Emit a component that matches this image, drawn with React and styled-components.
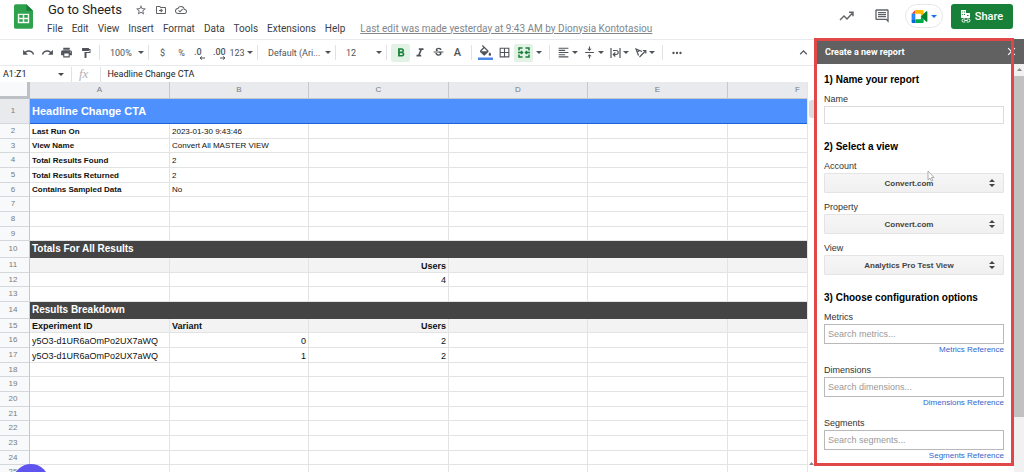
import { useState } from "react";
import styled, { createGlobalStyle } from "styled-components";
import { MdStarBorder, MdOutlineDriveFileMove, MdOutlineCloudDone, MdUndo, MdRedo, MdPrint, MdFormatPaint, MdFormatBold, MdFormatItalic, MdStrikethroughS, MdBorderAll, MdFormatAlignLeft, MdVerticalAlignCenter, MdMoreHoriz, MdKeyboardArrowUp, MdOutlineComment, MdClose } from "react-icons/md";

const GlobalStyle = createGlobalStyle`
  * {
    box-sizing: border-box;
  }
  body {
    margin: 0;
    background: #fff;
    color: #000;
    font-family: Roboto, "Liberation Sans", sans-serif;
    overflow: hidden;
  }
  button, input, select {
    font-family: inherit;
  }
`

const Page = styled.div`
  display: flex;
  flex-direction: column;
  height: 100vh;
  overflow: hidden;
`

const Header = styled.header`
  display: flex;
  flex: none;
  height: 39px;
  padding: 0 12px;
`

const Logo = styled.svg`
  flex: none;
  width: 19px;
  height: 25px;
  margin: 4px 14px 0 2px;
`

const HeaderText = styled.div`
  flex: 1;
  min-width: 0;
`

const TitleRow = styled.div`
  display: flex;
  align-items: center;
  gap: 8px;
  height: 20px;
  padding-left: 1px;
  color: #5f6368;
`

const Title = styled.h1`
  margin: 0 5px 0 0;
  font-size: 13px;
  font-weight: 400;
  line-height: 20px;
  color: #222;
`

const MenuBar = styled.nav`
  display: flex;
  align-items: center;
  gap: 9px;
  height: 17px;
`

const MenuItem = styled.button`
  padding: 0;
  border: none;
  background: none;
  font-size: 10px;
  line-height: 16px;
  color: #3c4043;
`

const LastEdit = styled.a`
  margin-left: 6px;
  font-size: 10px;
  line-height: 16px;
  white-space: nowrap;
  color: #80868b;
`

const HeaderActions = styled.div`
  display: flex;
  align-items: center;
  height: 32px;
  color: #5f6368;
`

const IconButton = styled.button`
  display: flex;
  align-items: center;
  justify-content: center;
  flex: none;
  width: ${props => props.$width || 19}px;
  height: 18px;
  padding: 0;
  border: none;
  border-radius: 2px;
  color: ${props => props.$active ? "#188038" : "inherit"};
  background: ${props => props.$active ? "#e2f3e6" : "none"};
`

const MeetButton = styled.button`
  display: flex;
  align-items: center;
  justify-content: center;
  gap: 3px;
  width: 38px;
  height: 24px;
  margin: 0 8px 0 6px;
  padding: 0;
  border: 1px solid #e6e8eb;
  border-radius: 12px;
  color: #1a73e8;
  background: #fff;
`

const ShareButton = styled.button`
  display: flex;
  align-items: center;
  justify-content: center;
  gap: 4px;
  width: 62px;
  height: 25px;
  margin-right: -1px;
  padding: 0;
  border: none;
  border-radius: 3px;
  font-size: 11px;
  font-weight: 500;
  color: #fff;
  background: #188038;
`

const Body = styled.div`
  display: flex;
  flex: 1;
  min-height: 0;
`

const Workspace = styled.main`
  display: flex;
  flex-direction: column;
  flex: 1;
  min-width: 0;
`

const Toolbar = styled.div`
  display: flex;
  align-items: center;
  flex: none;
  height: 27px;
  padding: 0 2px 0 19px;
  border-top: 1px solid #e8eaed;
  border-bottom: 1px solid #e8eaed;
  color: #50545a;
`

const ToolButton = styled(IconButton)`
  font-size: 9px;
  gap: 2px;
`

const DropButton = styled(ToolButton)`
  justify-content: space-between;
  padding-left: 6px;
`

const Divider = styled.span`
  flex: none;
  width: 1px;
  height: 15px;
  margin: 0 4px;
  background: #e0e2e5;
`

const Spacer = styled.span`
  flex: 1;
`

const TextColor = styled.span`
  font-size: 11px;
  font-weight: 500;
  line-height: 14px;
`

const FormulaBar = styled.div`
  display: flex;
  align-items: center;
  flex: none;
  height: 16px;
  padding-left: 3px;
  color: #444746;
`

const NameBox = styled.input`
  width: 52px;
  padding: 0;
  border: none;
  font-size: 9px;
  line-height: 14px;
  color: #222;
`

const Fx = styled.label`
  padding: 0 8px 0 3px;
  font: italic 13px "Liberation Serif", serif;
  line-height: 14px;
  color: #b0b3b7;
`

const FormulaInput = styled.input`
  flex: 1;
  min-width: 0;
  padding: 0 2px;
  border: none;
  font-size: 9px;
  line-height: 14px;
  color: #222;
`

const SheetArea = styled.div`
  display: flex;
  flex: 1;
  min-height: 0;
`

const SheetView = styled.div`
  flex: 1;
  min-width: 0;
  overflow: hidden;
`

const SheetScroll = styled.div`
  display: flex;
  flex-direction: column;
  justify-content: space-between;
  flex: none;
  width: 8px;
  padding: 18px 0 7px 1px;
  border-left: 1px solid #e3e5e8;
  color: #80868b;
  &::before {
    content: "";
    height: 18px;
    border-radius: 3px 0 0 3px;
    background: #dadce0;
  }
`

const Sheet = styled.table`
  width: max(100%, 868px);
  table-layout: fixed;
  border-collapse: separate;
  border-spacing: 0;
  font-family: "Liberation Sans", Arial, sans-serif;
`

const ColHead = styled.th`
  height: 17px;
  padding: 0;
  border-right: 1px solid #c4c7cb;
  border-bottom: 1px solid #c4c7cb;
  font-size: 8px;
  font-weight: 400;
  line-height: 14px;
  color: #777b80;
  background: #e8eaed;
`

const Corner = styled.td`
  padding: 0;
  border-right: 3px solid #bdc0c4;
  border-bottom: 3px solid #bdc0c4;
  background: #f8f9fa;
`

const RowHead = styled.th`
  padding: 0 3px 0 0;
  border-right: 1px solid #c4c7cb;
  border-bottom: 1px solid #d5d7da;
  font-size: 8px;
  font-weight: 400;
  line-height: 12px;
  color: #777b80;
  background: ${props => props.$selected ? "#e8eaed" : "#f8f9fa"};
`

const Cell = styled.td`
  padding: 0 2px;
  border-right: 1px solid #e2e3e3;
  border-bottom: 1px solid #e2e3e3;
  font-size: ${props => props.$small ? 8 : 9}px;
  font-weight: ${props => props.$bold ? 700 : 400};
  line-height: 12px;
  text-align: ${props => props.$right ? "right" : "left"};
  vertical-align: bottom;
  white-space: nowrap;
  color: #111;
`

const Row = styled.tr`
  height: ${props => props.$height}px;
  ${Cell} {
    background: ${props => props.$shaded ? "#f3f3f3" : "#fff"};
  }
`

const BandCell = styled(Cell)`
  ${Row} & {
    border-color: ${props => props.$selected ? "#1a62d6" : "#444"};
    color: #fff;
    background: ${props => props.$selected ? "#4d90fe" : "#444"};
    font-size: ${props => props.$selected ? 11 : 10}px;
    font-weight: 700;
    vertical-align: middle;
  }
`

const Sidebar = styled.aside`
  position: relative;
  display: flex;
  flex-direction: column;
  flex: none;
  width: 209px;
  font-family: "Liberation Sans", Arial, sans-serif;
`

const SidebarHeader = styled.div`
  display: flex;
  align-items: center;
  justify-content: space-between;
  flex: none;
  height: 25px;
  padding: 0 5px 0 10px;
  color: #fff;
  background: #616161;
`

const SidebarTitle = styled.h2`
  margin: 0;
  font: 700 9px Roboto, sans-serif;
`

const SidebarBody = styled.div`
  display: flex;
  flex: 1;
  min-height: 0;
`

const Form = styled.form`
  flex: 1;
  min-width: 0;
  padding: 8px 10px 0 9px;
  overflow: hidden;
`

const Section = styled.section`
  margin-bottom: 15px;
`

const SectionTitle = styled.h3`
  margin: 0 0 5px;
  font-size: 10px;
  line-height: 16px;
`

const Field = styled.div`
  display: flex;
  flex-direction: column;
  margin-bottom: 8px;
`

const Label = styled.label`
  font-size: 9px;
  line-height: 13px;
  color: #333;
`

const TextInput = styled.input`
  height: ${props => props.$tall ? 20 : 18}px;
  padding: 0 3px;
  border: 1px solid ${props => props.$tall ? "#b9b9b9" : "#dcdcdc"};
  font-size: 9px;
  background: #fff;
  &::placeholder {
    color: #999;
  }
`

const SelectWrap = styled.div`
  position: relative;
  svg {
    position: absolute;
    right: 9px;
    top: 6px;
    pointer-events: none;
  }
`

const Select = styled.select`
  display: block;
  appearance: none;
  width: 100%;
  height: 20px;
  padding: 0 10px 0 0;
  border: 1px solid #e4e4e4;
  border-radius: 1px;
  font-size: 8px;
  font-weight: 700;
  text-align: center;
  text-align-last: center;
  color: #444;
  background: linear-gradient(#f6f6f6, #f0f0f0);
`

const Reference = styled.a`
  align-self: flex-end;
  font-size: 8px;
  line-height: 12px;
  color: #3366cc;
  text-decoration: none;
`

const SidebarScroll = styled.div`
  flex: none;
  width: 10px;
  padding-top: 12px;
  background: #f1f1f1;
  position: relative;
  &::after {
    content: "";
    display: block;
    height: 86%;
    background: #c1c1c1;
  }
  svg {
    position: absolute;
    top: 4px;
    left: 3px;
  }
`

const Highlight = styled.div`
  position: absolute;
  inset: -1px 10px 6px -1px;
  border: 3px solid #e04848;
  pointer-events: none;
`

const Pointer = styled.svg`
  position: absolute;
  left: 112px;
  top: 131px;
`

const Bubble = styled.div`
  position: fixed;
  left: 13px;
  bottom: -28px;
  width: 36px;
  height: 36px;
  border-radius: 50%;
  background: #5f55ee;
`

const columns = ["A", "B", "C", "D", "E", "F"];
const widths = [140, 139, 140, 139, 140];

const rows = [
  { band: "Headline Change CTA", selected: true, height: 25 },
  { cells: ["Last Run On", "2023-01-30 9:43:46"], info: true },
  { cells: ["View Name", "Convert All MASTER VIEW"], info: true },
  { cells: ["Total Results Found", "2"], info: true },
  { cells: ["Total Results Returned", "2"], info: true },
  { cells: ["Contains Sampled Data", "No"], info: true },
  {},
  {},
  {},
  { band: "Totals For All Results", height: 17 },
  { cells: ["", "", "Users"], shaded: true },
  { cells: ["", "", "4"] },
  {},
  { band: "Results Breakdown", height: 17 },
  { cells: ["Experiment ID", "Variant", "Users"], shaded: true },
  { cells: ["y5O3-d1UR6aOmPo2UX7aWQ", "0", "2"] },
  { cells: ["y5O3-d1UR6aOmPo2UX7aWQ", "1", "2"] },
  {}, {}, {}, {}, {}, {}, {}, {},
];

const Caret = () => (
  <svg width="6" height="3" viewBox="0 0 6 3">
    <path d="M0 0h6L3 3z" fill="currentColor" />
  </svg>
);

const SheetsLogo = () => (
  <Logo viewBox="0 0 20 26">
    <path d="M2 0h11l7 7v17a2 2 0 0 1-2 2H2a2 2 0 0 1-2-2V2a2 2 0 0 1 2-2z" fill="#2da14c" />
    <path d="M13 0l7 7h-7z" fill="#168039" />
    <path d="M4 10h12v10H4zM5.500 11.500v2.700h3.700v-2.700zM10.800 11.500v2.700h3.700v-2.700zM5.500 15.800v2.700h3.700v-2.700zM10.800 15.800v2.700h3.700v-2.700z" fill="#f1f8f2" fillRule="evenodd" />
  </Logo>
);

const TrendIcon = () => (
  <svg width="15" height="10" viewBox="0 0 15 10" fill="none" stroke="currentColor" strokeWidth="1.400">
    <path d="M1 9l4-4 3 3 5.500-6M10 1.200h4v4" />
  </svg>
);

const MeetIcon = () => (
  <svg width="17" height="13" viewBox="0 0 17 14">
    <path d="M4 0v4H0z" fill="#ea4335" />
    <path d="M0 4h4v6H0z" fill="#2684fc" />
    <path d="M0 10h4v4H1a1 1 0 0 1-1-1z" fill="#0066da" />
    <path d="M4 0h8a1 1 0 0 1 1 1v3.500L10 7V4H4z" fill="#ffba00" />
    <path d="M4 10h6V7l3 2v4a1 1 0 0 1-1 1H4z" fill="#00ac47" />
    <path d="M10 7l5.500-5.500c.600-.500 1.500-.200 1.500.500v10c0 .700-.900 1-1.500.500z" fill="#00832d" />
  </svg>
);

const ShareIcon = () => (
  <svg width="10" height="13" viewBox="0 0 10 13" fill="#fff">
    <path d="M0 0h5v3h4v5H0zM1.200 1.400v1h1v-1zM3 1.400v1h1v-1zM1.200 4v1h1V4zM3 4v1h1V4zM6 5v1h1.500V5z" fillRule="evenodd" />
    <path d="M4.300 9H2.500a1.500 1.500 0 0 0 0 3h1.800M5.700 9h1.800a1.500 1.500 0 0 1 0 3H5.700M3.300 10.500h3.400" fill="none" stroke="#fff" />
  </svg>
);

const FillIcon = () => (
  <svg width="15" height="15" viewBox="0 0 24 24" fill="currentColor">
    <path d="M16.560 8.940L7.620 0 6.210 1.410l2.380 2.380-5.150 5.150c-.590.590-.590 1.540 0 2.120l5.500 5.500c.290.290.680.440 1.060.440s.770-.150 1.060-.440l5.500-5.500c.590-.580.590-1.530 0-2.120zM5.210 10L10 5.210 14.790 10H5.210zM19 11.500s-2 2.170-2 3.500c0 1.100.900 2 2 2s2-.900 2-2c0-1.330-2-3.500-2-3.500z" />
    <path d="M0 20h24v4H0z" fill="#4a86e8" />
  </svg>
);

const MergeIcon = () => (
  <svg width="12" height="11" viewBox="0 0 12 11" fill="none" stroke="currentColor" strokeWidth="1.500">
    <path d="M1 3.500V1h3.500M7.500 1H11v2.500M1 7.500V10h3.500M7.500 10H11V7.500M0 5.500h4M12 5.500H8M3 4l1.500 1.500L3 7M9 4L7.500 5.500 9 7" />
  </svg>
);

const WrapIcon = () => (
  <svg width="11" height="10" viewBox="0 0 11 10" fill="none" stroke="currentColor" strokeWidth="1.200">
    <path d="M1 0v10M10 0v10M3 2.500h3.200a2 2 0 0 1 0 4H3.500M5.300 4.500l-2 2 2 2" />
  </svg>
);

const RotateIcon = () => (
  <svg width="12" height="10" viewBox="0 0 12 10" fill="none" stroke="currentColor" strokeWidth="1.200">
    <path d="M3.500 7.500L1 1l6 2.500M2 4.200l2.500-1.700M4.500 9l6-6M7.800 2.500h3v3" />
  </svg>
);

const Decimal = ({ text, right }) => (
  <svg width="14" height="15" viewBox="0 0 14 15" fill="currentColor">
    <text x="0" y="10" fontSize="9" fontFamily="Roboto, sans-serif" fontWeight="500">{text}</text>
    <path d={right ? "M7 13h5M10 11.500l2 1.500-2 1.500" : "M6 13h5M8 11.500L6 13l2 1.500"} fill="none" stroke="currentColor" />
  </svg>
);

const Arrows = () => (
  <svg width="6" height="8" viewBox="0 0 6 8">
    <path d="M0 3l3-3 3 3zM0 5h6L3 8z" fill="#444" />
  </svg>
);

// plain rows alternate so that three of them take 44px
const rowHeight = (row, i) => row.height || (i % 3 === 2 ? 14 : 15);

const SheetRow = ({ row, index }) => (
  <Row $height={rowHeight(row, index)} $shaded={row.shaded}>
    <RowHead scope="row" $selected={row.selected}>{index + 1}</RowHead>
    {row.band ? (
      <BandCell colSpan={6} $selected={row.selected}>{row.band}</BandCell>
    ) : (
      columns.map((name, c) => (
        <Cell
          key={name}
          $small={row.info}
          $bold={row.shaded || (row.info && c === 0)}
          $right={!row.info && (c === 2 || (c === 1 && !row.shaded))}
        >
          {row.cells?.[c]}
        </Cell>
      ))
    )}
  </Row>
);

const SelectField = ({ id, label, value }) => (
  <Field>
    <Label htmlFor={id}>{label}</Label>
    <SelectWrap>
      <Select id={id} defaultValue={value}>
        <option>{value}</option>
      </Select>
      <Arrows />
    </SelectWrap>
  </Field>
);

const SearchField = ({ id, label, placeholder, link }) => (
  <Field>
    <Label htmlFor={id}>{label}</Label>
    <TextInput $tall id={id} placeholder={placeholder} />
    <Reference href="#">{link}</Reference>
  </Field>
);

const App = () => {
  const [name, setName] = useState("");
  const [formula, setFormula] = useState("Headline Change CTA");

  return (
    <Page>
      <GlobalStyle />
      <Header>
        <SheetsLogo />
        <HeaderText>
          <TitleRow>
            <Title>Go to Sheets</Title>
            <MdStarBorder size={12} />
            <MdOutlineDriveFileMove size={12} />
            <MdOutlineCloudDone size={12} />
          </TitleRow>
          <MenuBar>
            {["File", "Edit", "View", "Insert", "Format", "Data", "Tools", "Extensions", "Help"].map((item) => (
              <MenuItem key={item} type="button">{item}</MenuItem>
            ))}
            <LastEdit href="#">Last edit was made yesterday at 9:43 AM by Dionysia Kontotasiou</LastEdit>
          </MenuBar>
        </HeaderText>
        <HeaderActions>
          <IconButton aria-label="Activity" $width={35}><TrendIcon /></IconButton>
          <IconButton aria-label="Comments" $width={35}><MdOutlineComment size={16} /></IconButton>
          <MeetButton aria-label="Meet"><MeetIcon /><Caret /></MeetButton>
          <ShareButton type="button"><ShareIcon />Share</ShareButton>
        </HeaderActions>
      </Header>
      <Body>
        <Workspace>
          <Toolbar>
            <ToolButton aria-label="Undo"><MdUndo size={13} /></ToolButton>
            <ToolButton aria-label="Redo"><MdRedo size={13} /></ToolButton>
            <ToolButton aria-label="Print"><MdPrint size={13} /></ToolButton>
            <ToolButton aria-label="Paint format"><MdFormatPaint size={12} /></ToolButton>
            <Divider />
            <DropButton $width={40}>100%<Caret /></DropButton>
            <Divider />
            <ToolButton>$</ToolButton>
            <ToolButton>%</ToolButton>
            <ToolButton aria-label="Fewer decimals"><Decimal text=".0" /></ToolButton>
            <ToolButton aria-label="More decimals"><Decimal text=".00" right /></ToolButton>
            <ToolButton $width={24}>123<Caret /></ToolButton>
            <Divider />
            <DropButton $width={69}>Default (Ari...<Caret /></DropButton>
            <Divider />
            <DropButton $width={42}>12<Caret /></DropButton>
            <Divider />
            <ToolButton aria-label="Bold" $active><MdFormatBold size={14} /></ToolButton>
            <ToolButton aria-label="Italic"><MdFormatItalic size={14} /></ToolButton>
            <ToolButton aria-label="Strikethrough"><MdStrikethroughS size={13} /></ToolButton>
            <ToolButton aria-label="Text color"><TextColor>A</TextColor></ToolButton>
            <Divider />
            <ToolButton aria-label="Fill color"><FillIcon /></ToolButton>
            <ToolButton aria-label="Borders"><MdBorderAll size={13} /></ToolButton>
            <ToolButton aria-label="Merge" $active><MergeIcon /></ToolButton>
            <ToolButton aria-label="Merge options" $width={12}><Caret /></ToolButton>
            <Divider />
            <ToolButton aria-label="Align" $width={26}><MdFormatAlignLeft size={13} /><Caret /></ToolButton>
            <ToolButton aria-label="Vertical align" $width={26}><MdVerticalAlignCenter size={13} /><Caret /></ToolButton>
            <ToolButton aria-label="Wrap" $width={26}><WrapIcon /><Caret /></ToolButton>
            <ToolButton aria-label="Rotate" $width={26}><RotateIcon /><Caret /></ToolButton>
            <Divider />
            <ToolButton aria-label="More"><MdMoreHoriz size={14} /></ToolButton>
            <Spacer />
            <ToolButton aria-label="Hide menus"><MdKeyboardArrowUp size={15} /></ToolButton>
          </Toolbar>
          <FormulaBar>
            <NameBox aria-label="Name box" defaultValue="A1:Z1" />
            <ToolButton aria-label="Ranges" $width={12}><Caret /></ToolButton>
            <Divider />
            <Fx htmlFor="formula">fx</Fx>
            <Divider />
            <FormulaInput id="formula" value={formula} onChange={(e) => setFormula(e.target.value)} />
          </FormulaBar>
          <SheetArea>
            <SheetView>
              <Sheet>
                <colgroup>
                  <col width="30" />
                  {widths.map((width, i) => <col key={i} width={width} />)}
                  <col />
                </colgroup>
                <thead>
                  <tr>
                    <Corner />
                    {columns.map((name) => <ColHead key={name} scope="col">{name}</ColHead>)}
                  </tr>
                </thead>
                <tbody>
                  {rows.map((row, i) => <SheetRow key={i} row={row} index={i} />)}
                </tbody>
              </Sheet>
            </SheetView>
            <SheetScroll>
              <svg width="5" height="3" viewBox="0 0 5 3"><path d="M0 3h5L2.500 0z" fill="currentColor" /></svg>
            </SheetScroll>
          </SheetArea>
        </Workspace>
        <Sidebar>
          <SidebarHeader>
            <SidebarTitle>Create a new report</SidebarTitle>
            <IconButton aria-label="Close" $width={16}><MdClose size={13} /></IconButton>
          </SidebarHeader>
          <SidebarBody>
            <Form>
              <Section>
                <SectionTitle>1) Name your report</SectionTitle>
                <Field>
                  <Label htmlFor="name">Name</Label>
                  <TextInput id="name" value={name} onChange={(e) => setName(e.target.value)} />
                </Field>
              </Section>
              <Section>
                <SectionTitle>2) Select a view</SectionTitle>
                <SelectField id="account" label="Account" value="Convert.com" />
                <SelectField id="property" label="Property" value="Convert.com" />
                <SelectField id="view" label="View" value="Analytics Pro Test View" />
              </Section>
              <Section>
                <SectionTitle>3) Choose configuration options</SectionTitle>
                <SearchField id="metrics" label="Metrics" placeholder="Search metrics..." link="Metrics Reference" />
                <SearchField id="dimensions" label="Dimensions" placeholder="Search dimensions..." link="Dimensions Reference" />
                <SearchField id="segments" label="Segments" placeholder="Search segments..." link="Segments Reference" />
              </Section>
            </Form>
            <SidebarScroll>
              <svg width="5" height="3" viewBox="0 0 5 3"><path d="M0 3h5L2.500 0z" fill="#8a8a8a" /></svg>
            </SidebarScroll>
          </SidebarBody>
          <Highlight />
          <Pointer width="8" height="12" viewBox="0 0 8 12">
            <path d="M1 1v9l2-2 1.500 3 1.300-.600L4.500 7.500H7z" fill="#fff" stroke="#999" strokeWidth=".8" />
          </Pointer>
        </Sidebar>
      </Body>
      <Bubble />
    </Page>
  );
};

export default App;
